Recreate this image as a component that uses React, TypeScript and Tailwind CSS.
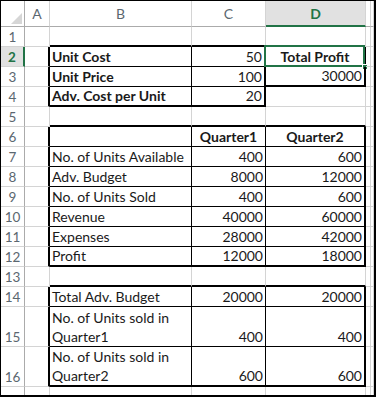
import { Fragment } from "react";

type Edge = "g" | "t" | "k";
type Align = "l" | "r" | "c";

interface CellData {
  text?: React.ReactNode;
  bold?: boolean;
  align?: Align;
}

const rightEdge: Record<Edge, string> = {
  g: "border-r border-r-[#d4d4d4]",
  t: "border-r border-r-black",
  k: "border-r-2 border-r-black",
};

const bottomEdge: Record<Edge, string> = {
  g: "border-b border-b-[#d4d4d4]",
  t: "border-b border-b-black",
  k: "border-b-2 border-b-black",
};

const alignClass: Record<Align, string> = {
  l: "justify-start pl-[2px]",
  r: "justify-end pr-[2px]",
  c: "justify-center",
};

const cols = ["A", "B", "C", "D", "E", "F"];

const data: Record<number, Record<string, CellData>> = {
  2: {
    B: { text: "Unit Cost", bold: true },
    C: { text: "50", align: "r" },
    D: { text: "Total Profit", bold: true, align: "c" },
  },
  3: {
    B: { text: "Unit Price", bold: true },
    C: { text: "100", align: "r" },
    D: { text: "30000", align: "r" },
  },
  4: {
    B: { text: "Adv. Cost per Unit", bold: true },
    C: { text: "20", align: "r" },
  },
  6: {
    C: { text: "Quarter1", bold: true, align: "c" },
    D: { text: "Quarter2", bold: true, align: "c" },
  },
  7: {
    B: { text: "No. of Units Available" },
    C: { text: "400", align: "r" },
    D: { text: "600", align: "r" },
  },
  8: {
    B: { text: "Adv. Budget" },
    C: { text: "8000", align: "r" },
    D: { text: "12000", align: "r" },
  },
  9: {
    B: { text: "No. of Units Sold" },
    C: { text: "400", align: "r" },
    D: { text: "600", align: "r" },
  },
  10: {
    B: { text: "Revenue" },
    C: { text: "40000", align: "r" },
    D: { text: "60000", align: "r" },
  },
  11: {
    B: { text: "Expenses" },
    C: { text: "28000", align: "r" },
    D: { text: "42000", align: "r" },
  },
  12: {
    B: { text: "Profit" },
    C: { text: "12000", align: "r" },
    D: { text: "18000", align: "r" },
  },
  14: {
    B: { text: "Total Adv. Budget" },
    C: { text: "20000", align: "r" },
    D: { text: "20000", align: "r" },
  },
  15: {
    B: {
      text: (
        <>
          No. of Units sold in
          <br />
          Quarter1
        </>
      ),
    },
    C: { text: "400", align: "r" },
    D: { text: "400", align: "r" },
  },
  16: {
    B: {
      text: (
        <>
          No. of Units sold in
          <br />
          Quarter2
        </>
      ),
    },
    C: { text: "600", align: "r" },
    D: { text: "600", align: "r" },
  },
};

const inRange = (r: number, list: number[]) => list.includes(r);
const framed = [2, 3, 4, 6, 7, 8, 9, 10, 11, 12, 14, 15, 16];
const bigTables = [6, 7, 8, 9, 10, 11, 12, 14, 15, 16];

function rightOf(row: number, col: string): Edge {
  if (col === "A") return inRange(row, framed) ? "k" : "g";
  if (col === "B") return inRange(row, framed) ? "t" : "g";
  if (col === "C") {
    if (inRange(row, [2, 3, 4])) return "k";
    return inRange(row, bigTables) ? "t" : "g";
  }
  if (col === "D") return inRange(row, [2, 3, ...bigTables]) ? "k" : "g";
  return "g";
}

function bottomOf(row: number, col: string): Edge {
  if (!["B", "C", "D"].includes(col)) return "g";
  if (col === "D") {
    if (row === 3) return "k";
    if (row < 5) return "g";
  }
  if (row === 1 || row === 4) return "k";
  if (row === 2 || row === 3) return "t";
  if ([5, 12, 13, 16].includes(row)) return "k";
  if ((row >= 6 && row <= 11) || row === 14 || row === 15) return "t";
  return "g";
}

const rows = Array.from({ length: 16 }, (_, i) => i + 1);

export default function App() {
  return (
    <div className="w-[376px] h-[397px] bg-white border-l border-t border-r-2 border-b-2 border-black overflow-hidden font-['Lato',sans-serif] text-[14px] text-[#1a1a1a]">
      <div className="grid grid-cols-[24px_25px_142px_74px_100px_5px_1fr] grid-rows-[26px_repeat(14,20px)_40px_40px_1fr] h-full">
        {/* corner */}
        <div className="border-r border-r-[#ababab] border-b border-b-[#ababab]">
          <svg width="23" height="25" viewBox="0 0 23 25">
            <polygon points="10,23 21,23 21,12" fill="#d6d6d6" />
          </svg>
        </div>
        {/* column headers */}
        {cols.map((c) =>
          c === "D" ? (
            <div
              key={c}
              className="flex items-center justify-center bg-[#e1e1e1] border-r border-r-[#d4d4d4] border-b-2 border-b-[#217346] text-[#217346] font-bold text-[14px]"
            >
              D
            </div>
          ) : (
            <div
              key={c}
              className="flex items-center justify-center border-r border-r-[#d4d4d4] border-b border-b-[#ababab] text-[#5b6770] text-[14px]"
            >
              {c === "E" || c === "F" ? "" : c}
            </div>
          )
        )}

        {rows.map((r) => (
          <Fragment key={r}>
            <div
              className={
                r === 2
                  ? "flex items-end justify-center bg-[#e1e1e1] border-r-2 border-r-[#217346] border-b border-b-[#d4d4d4] text-[#217346] font-bold text-[13.5px] leading-[18px]"
                  : "flex items-end justify-center border-r border-r-[#ababab] border-b border-b-[#d4d4d4] text-[#5b6770] text-[13.5px] leading-[18px]"
              }
            >
              {r}
            </div>
            {cols.map((c) => {
              const cell = data[r]?.[c];
              const align = cell?.align ?? "l";
              return (
                <div
                  key={c}
                  className={[
                    "relative flex items-end whitespace-nowrap",
                    rightEdge[rightOf(r, c)],
                    bottomEdge[bottomOf(r, c)],
                    alignClass[align],
                    cell?.bold ? "font-bold" : "",
                  ].join(" ")}
                >
                  {cell?.text !== undefined && (
                    <span className={r >= 15 ? "leading-[19px]" : "leading-[18px]"}>{cell.text}</span>
                  )}
                  {r === 2 && c === "D" && (
                    <>
                      <div className="absolute -left-[2px] -top-[2px] -right-[1px] -bottom-[1px] border-2 border-[#217346]" />
                      <div className="absolute -right-[4px] -bottom-[4px] w-[6px] h-[6px] bg-[#217346] border border-white" />
                    </>
                  )}
                </div>
              );
            })}
          </Fragment>
        ))}

        {/* partial row 17 */}
        <div className="border-r border-r-[#ababab]" />
        {cols.map((c) => (
          <div key={c} className="border-r border-r-[#d4d4d4]" />
        ))}
      </div>
    </div>
  );
}
